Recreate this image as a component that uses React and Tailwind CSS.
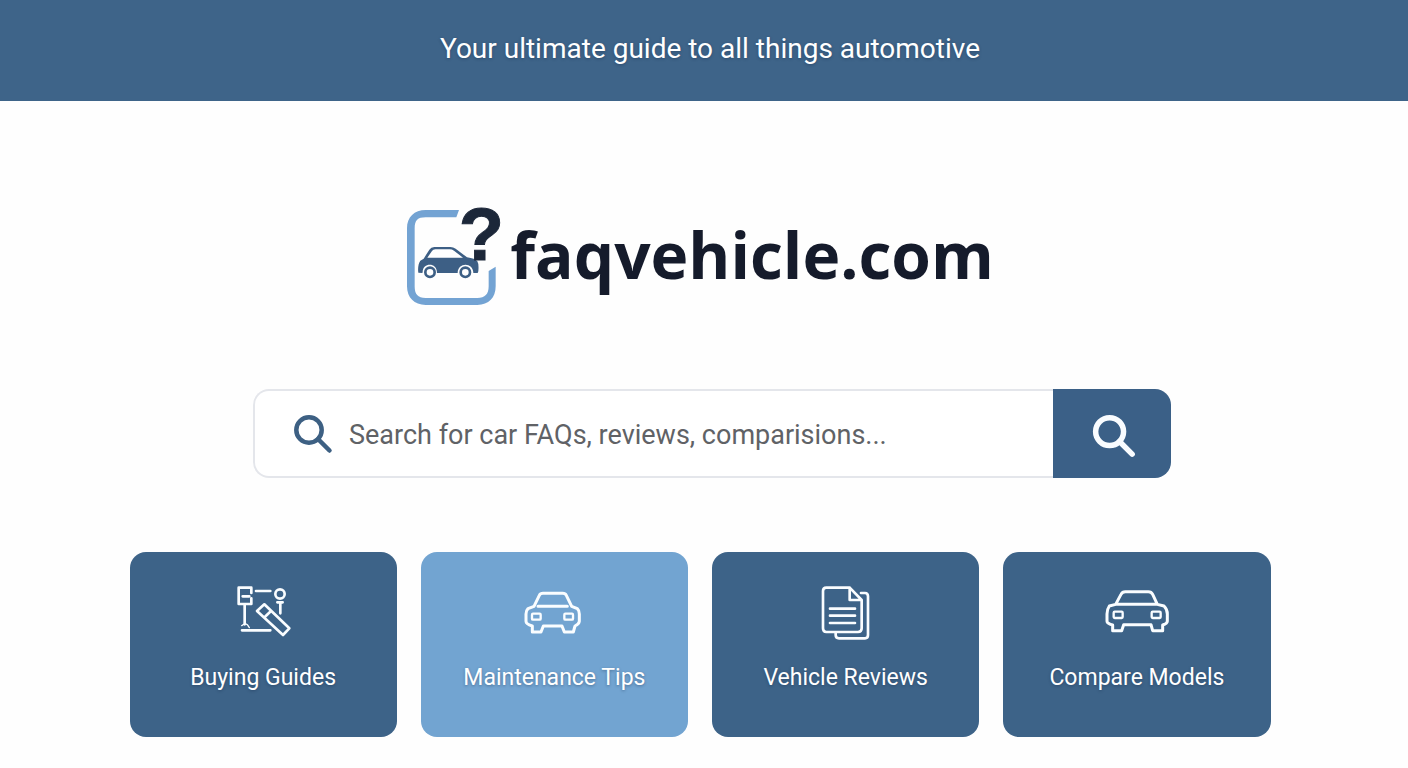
const SANS = "font-['Roboto','Liberation_Sans',sans-serif]";

function LogoMark() {
  return (
    <svg viewBox="33 27 288 306" className="h-[102px] w-24 shrink-0 overflow-visible" aria-hidden="true">
      <path
        d="M192 45H92C58 45 36 66 36 100V274C36 308 58 330 92 330H247C281 330 302 308 302 274V215L281 228V274C281 298 270 309 247 309H92C68 309 59 298 59 274V100C59 76 68 67 92 67H184Z"
        fill="#73a3d3"
      />
      <path
        d="M70 233C68 220 70 205 76 197L86 191L103 164Q108 156 118 156H166Q175 156 182 161L216 187Q240 190 247 199Q252 207 250 229L248 234H235C235 201 188 201 188 234H126C126 201 83 203 83 231L82 234Z"
        fill="#3d5f85"
      />
      <path d="M97 188L111 168Q114 163 121 163H164Q171 163 177 167L204 188Z" fill="#fff" />
      <circle cx="105" cy="232" r="14" fill="#fff" stroke="#3d5f85" strokeWidth="8" />
      <circle cx="211" cy="232" r="14" fill="#fff" stroke="#3d5f85" strokeWidth="8" />
      <text x="191" y="196" fill="#1c2739" stroke="#1c2739" strokeWidth="3" fontSize="222" fontWeight="700" fontFamily="Liberation Sans, sans-serif">?</text>
    </svg>
  );
}

function SearchIcon({ className, strokeWidth, ...rest }) {
  return (
    <svg viewBox="0 0 40 40" className={className} fill="none" stroke="currentColor" strokeWidth={strokeWidth} {...rest}>
      <circle cx="16" cy="16" r="12.7" />
      <path d="M25 25L36.500 36.500" strokeLinecap="round" />
    </svg>
  );
}

function IconFrame({ viewBox = "0 0 240 210", children }) {
  return (
    <svg viewBox={viewBox} className="h-[70px] w-20" fill="none" stroke="#fafdff" strokeWidth="9" strokeLinecap="round" strokeLinejoin="round" aria-hidden="true">
      {children}
    </svg>
  );
}

function ToolsIcon() {
  return (
    <IconFrame viewBox="-5 0 240 210">
      <path d="M80 54V38H42V87H80V70M54 64H74M94 48H137M60 89V148M52 166H137M158 82H174M167 84V115" strokeWidth="8" />
      <path d="M51 152Q61 143 68 149L74 158" strokeWidth="4" />
      <circle cx="166" cy="57" r="14" strokeWidth="8" />
      <path d="M119 88L194 160L175 180L97 108ZM139 108L118 128" strokeWidth="8" />
    </IconFrame>
  );
}

function CarIcon() {
  return (
    <IconFrame viewBox="-2 0 240 210">
      <path d="M58 94L74 61Q77 55 85 55H144Q152 55 155 61L171 94L188 101Q194 107 194 117V139Q193 147 181 153L176 171H149L142 153H86L79 171H53V153Q34 148 34 139V117Q34 107 40 101ZM70 94H158" />
      <rect x="52" y="116" width="26" height="18" rx="3" strokeWidth="7" />
      <rect x="149" y="116" width="26" height="18" rx="3" strokeWidth="7" />
    </IconFrame>
  );
}

function WideCarIcon() {
  return (
    <IconFrame viewBox="6 0 240 210">
      <path d="M62 88L78 58Q82 50 91 50H160Q169 50 173 58L187 88L207 93Q217 103 217 117V139Q217 146 203 150V167H173L168 149H86L80 167H53V150Q36 146 36 139V117Q36 103 43 93ZM64 88H186" />
      <rect x="56" y="110" width="27" height="19" rx="3" strokeWidth="7" />
      <rect x="170" y="110" width="27" height="19" rx="3" strokeWidth="7" />
    </IconFrame>
  );
}

function DocumentsIcon() {
  return (
    <IconFrame viewBox="3 0 240 210">
      <path d="M64 38H134L170 75V160Q170 171 159 171H64Q54 171 54 160V48Q54 38 64 38ZM134 38V75H170" strokeWidth="8" />
      <path d="M75 101H150M75 122H150M75 144H150" strokeWidth="8" />
      <path d="M168 54H180Q189 54 189 64V180Q189 190 180 190H102Q92 190 92 180V175" strokeWidth="8" />
    </IconFrame>
  );
}

const TOPICS = [
  { label: "Buying Guides", Icon: ToolsIcon, color: "bg-[#3d6388]" },
  { label: "Maintenance Tips", Icon: CarIcon, color: "bg-[#72a4d1]" },
  { label: "Vehicle Reviews", Icon: DocumentsIcon, color: "bg-[#3d6388]" },
  { label: "Compare Models", Icon: WideCarIcon, color: "bg-[#3d6388]" },
];

export default function App() {
  return (
    <div className={`min-h-screen bg-[#fefefe] ${SANS}`}>
      <header className="bg-[#3e6489] pt-[31px] pr-6 pb-[34px] pl-9 text-center text-white">
        <p className="text-[28px] leading-9 [text-shadow:0_1px_3px_rgb(20_40_70/0.4)]">
          Your ultimate guide to all things automotive
        </p>
      </header>

      <main className="px-6 pt-[103px] pb-8">
        <h1 className="flex items-center justify-center gap-2 pr-2 text-[#151b2b]">
          <LogoMark />
          <span className="font-['Open_Sans',sans-serif] text-[64px] leading-[102px] font-bold">faqvehicle.com</span>
        </h1>

        <form className="mt-[83px] pl-4" onSubmit={(e) => e.preventDefault()}>
          <div className="mx-auto flex h-[89px] w-full max-w-[918px]">
            <label htmlFor="search" className="flex items-center rounded-l-2xl border-2 border-r-0 border-[#e4e6eb] bg-white pr-4 pl-[38px] text-[#3d6083]">
              <SearchIcon className="size-10" strokeWidth="4.500" role="img" aria-label="Search" />
            </label>
            <input
              id="search"
              type="text"
              placeholder="Search for car FAQs, reviews, comparisions..."
              className="min-w-0 flex-1 border-y-2 border-[#e4e6eb] bg-white pt-1 text-[27px] text-[#606266] outline-none placeholder:text-[#606266]"
            />
            <button type="submit" aria-label="Search" className="flex w-[118px] items-center justify-center rounded-r-2xl bg-[#3b6087] pt-1 pl-1 text-[#f9fcff]">
              <SearchIcon className="size-11" strokeWidth="5" aria-hidden="true" />
            </button>
          </div>
        </form>

        <nav className="mt-[74px] pr-2" aria-label="Topics">
          <ul className="mx-auto grid max-w-[1141px] grid-cols-4 gap-6">
            {TOPICS.map(({ label, Icon, color }) => (
              <li key={label}>
                <a href="#" className={`flex flex-col items-center rounded-2xl pt-[23px] pb-[41px] text-white ${color}`}>
                  <Icon />
                  <span className="mt-[15px] text-[23px] leading-9 [text-shadow:0_1px_3px_rgb(20_40_70/0.4)]">{label}</span>
                </a>
              </li>
            ))}
          </ul>
        </nav>
      </main>
    </div>
  );
}
